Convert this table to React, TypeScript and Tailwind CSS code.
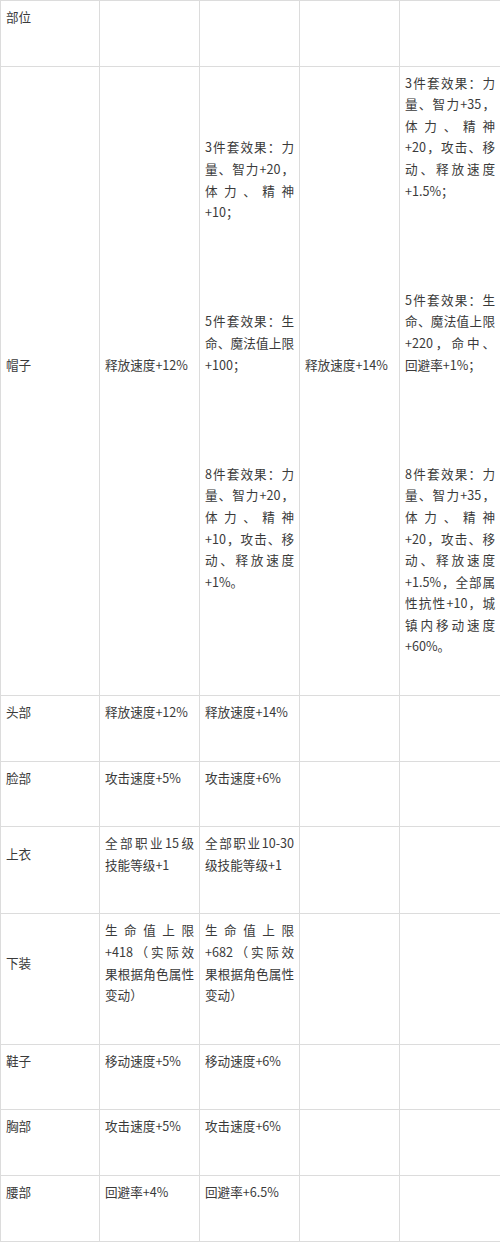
const rows: { part: string; cells: string[][] }[] = [
  { part: '部位', cells: [[''], [''], [''], ['']] },
  {
    part: '帽子',
    cells: [
      ['释放速度+12%'],
      ['3件套效果：力量、智力+20，体力、精神+10；', '', '5件套效果：生命、魔法值上限+100；', '', '8件套效果：力量、智力+20，体力、精神+10，攻击、移动、释放速度+1%。'],
      ['释放速度+14%'],
      [
        '3件套效果：力量、智力+35，体力、精神+20，攻击、移动、释放速度+1.5%；',
        '',
        '5件套效果：生命、魔法值上限+220，命中、回避率+1%；',
        '',
        '8件套效果：力量、智力+35，体力、精神+20，攻击、移动、释放速度+1.5%，全部属性抗性+10，城镇内移动速度+60%。',
      ],
    ],
  },
  { part: '头部', cells: [['释放速度+12%'], ['释放速度+14%'], [''], ['']] },
  { part: '脸部', cells: [['攻击速度+5%'], ['攻击速度+6%'], [''], ['']] },
  { part: '上衣', cells: [['全部职业15级技能等级+1'], ['全部职业10-30级技能等级+1'], [''], ['']] },
  {
    part: '下装',
    cells: [['生命值上限+418（实际效果根据角色属性变动）'], ['生命值上限+682（实际效果根据角色属性变动）'], [''], ['']],
  },
  { part: '鞋子', cells: [['移动速度+5%'], ['移动速度+6%'], [''], ['']] },
  { part: '胸部', cells: [['攻击速度+5%'], ['攻击速度+6%'], [''], ['']] },
  { part: '腰部', cells: [['回避率+4%'], ['回避率+6.5%'], [''], ['']] },
];

function Cell({ paras }: { paras: string[] }) {
  return (
    <td className="border border-[#dcdcdc] px-[5px] py-[5px] align-middle">
      {paras.map((t, i) => (
        <p key={i} className="mb-[33px] text-justify">
          {t || <br />}
        </p>
      ))}
    </td>
  );
}

export default function App() {
  return (
    <div
      lang="zh-CN"
      className="w-[500px] bg-white pb-[3px] text-[12.6px] leading-[21.6px] text-[#3a3a3a] [font-family:'Noto_Sans_CJK_SC','Microsoft_YaHei',sans-serif]"
    >
      <table className="w-[500px] table-fixed border-collapse">
        <colgroup>
          <col className="w-[99px]" />
          <col className="w-[100px]" />
          <col className="w-[100px]" />
          <col className="w-[100px]" />
          <col className="w-[101px]" />
        </colgroup>
        <tbody>
          {rows.map((r) => (
            <tr key={r.part}>
              <Cell paras={[r.part]} />
              {r.cells.map((c, i) => (
                <Cell key={i} paras={c} />
              ))}
            </tr>
          ))}
        </tbody>
      </table>
    </div>
  );
}
